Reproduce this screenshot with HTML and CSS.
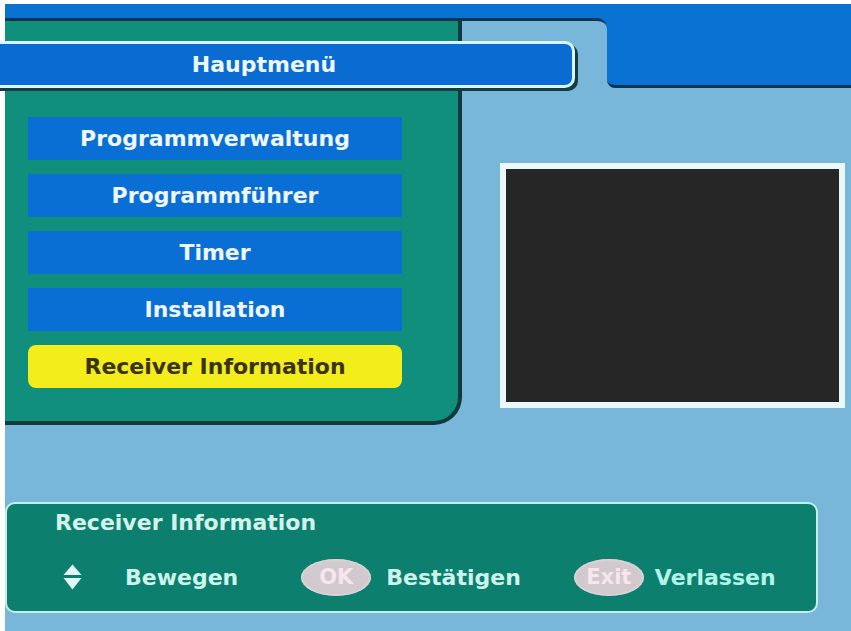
FILE: index.html
```html
<!DOCTYPE html>
<html lang="de">
<head>
<meta charset="utf-8">
<title>Hauptmenü</title>
<link rel="stylesheet" href="styles.css">
</head>
<body>
<div class="screen">
  <div class="topband"></div>
  <div class="main">
    <section class="panel">
      <div class="title-bar">Hauptmenü</div>
      <ul class="menu">
        <li class="item">Programmverwaltung</li>
        <li class="item">Programmführer</li>
        <li class="item">Timer</li>
        <li class="item">Installation</li>
        <li class="item active">Receiver Information</li>
      </ul>
    </section>
    <div class="side">
      <div class="side-top">
        <div class="notch"></div>
        <div class="tab"></div>
      </div>
      <div class="preview"></div>
    </div>
  </div>
  <footer class="help">
    <div class="help-title">Receiver Information</div>
    <div class="help-keys">
      <svg class="arrows" width="19" height="26" viewBox="0 0 19 26"><polygon points="9.5,0.5 18.5,11 0.5,11"/><polygon points="0.5,14 18.5,14 9.5,25.5"/></svg>
      <span class="label label-move">Bewegen</span>
      <span class="pill pill-ok">OK</span>
      <span class="label">Bestätigen</span>
      <span class="pill pill-exit">Exit</span>
      <span class="label label-exit">Verlassen</span>
    </div>
  </footer>
</div>
</body>
</html>
```

FILE: styles.css
```css
html, body {
  margin: 0;
  padding: 0;
  overflow: hidden;
  background: #ffffff;
}

body {
  font-family: "DejaVu Sans", "Liberation Sans", sans-serif;
  font-weight: bold;
}

.screen {
  margin: 4px 0 0 5px;
  width: 846px;
  height: 627px;
  background: #78b6da;
}

.topband {
  height: 14px;
  background: #0a72d2;
}

.main {
  display: flex;
  height: 407px;
}

.panel {
  box-sizing: border-box;
  width: 457px;
  height: 407px;
  background: #0f8f7c;
  border-top: 3px solid #0d3550;
  border-right: 4px solid #0f3a3e;
  border-bottom: 4px solid #0f3a3e;
  border-bottom-right-radius: 28px;
}

.title-bar {
  position: relative;
  z-index: 1;
  box-sizing: border-box;
  margin: 20px 0 0 -16px;
  width: 586px;
  height: 47px;
  padding-right: 36px;
  background: #0a6cd0;
  border: 3px solid #d6f6f8;
  border-radius: 0 10px 10px 0;
  box-shadow: 3px 3px 0 #173c46;
  color: #eef8ff;
  font-size: 22px;
  display: flex;
  align-items: center;
  justify-content: center;
}

.menu {
  list-style: none;
  margin: 29px 0 0 23px;
  padding: 0;
  width: 374px;
  display: flex;
  flex-direction: column;
  gap: 14px;
}

.item {
  height: 43px;
  display: flex;
  align-items: center;
  justify-content: center;
  background: #0a6fd4;
  color: #eef6ff;
  font-size: 22px;
}

.item.active {
  background: #f3ed1b;
  color: #3b3414;
  border-radius: 8px;
}

.side {
  flex: 1;
  display: flex;
  flex-direction: column;
}

.side-top {
  display: flex;
  height: 70px;
  background: linear-gradient(to bottom, #0a72d2 50%, #78b6da 50%);
}

.notch {
  width: 145px;
  background: #78b6da;
  border-top: 3px solid #0d3550;
  border-top-right-radius: 10px;
}

.tab {
  flex: 1;
  background: #0a72d2;
  border-bottom: 3px solid #0d3550;
  border-bottom-left-radius: 8px;
}

.preview {
  box-sizing: border-box;
  margin: 75px 0 0 38px;
  width: 345px;
  height: 245px;
  border: 6px solid #eaf8fb;
  background: #262626;
}

.help {
  box-sizing: border-box;
  margin-top: 77px;
  width: 813px;
  height: 111px;
  padding: 6px 0 0 48px;
  background: #0c7f6e;
  border: 2px solid #c4eeec;
  border-radius: 10px;
  color: #d4f2ec;
}

.help-title {
  font-size: 22px;
  line-height: 26px;
}

.help-keys {
  margin: 22px 0 0 8px;
  height: 38px;
  display: flex;
  align-items: center;
  font-size: 22px;
}

.arrows {
  fill: #e2f6f2;
  margin-right: 43px;
}

.label {
  color: #cdf3ec;
}

.label-move {
  margin-right: 63px;
}

.label-exit {
  color: #b4f4e8;
}

.pill {
  width: 70px;
  height: 37px;
  border-radius: 50%;
  background: #d2c9cf;
  box-shadow: inset 0 0 3px #f2eef0;
  color: #f7e6ec;
  font-size: 21px;
  display: flex;
  align-items: center;
  justify-content: center;
  margin-right: 15px;
}

.pill-exit {
  margin-left: 53px;
  margin-right: 11px;
}
```
